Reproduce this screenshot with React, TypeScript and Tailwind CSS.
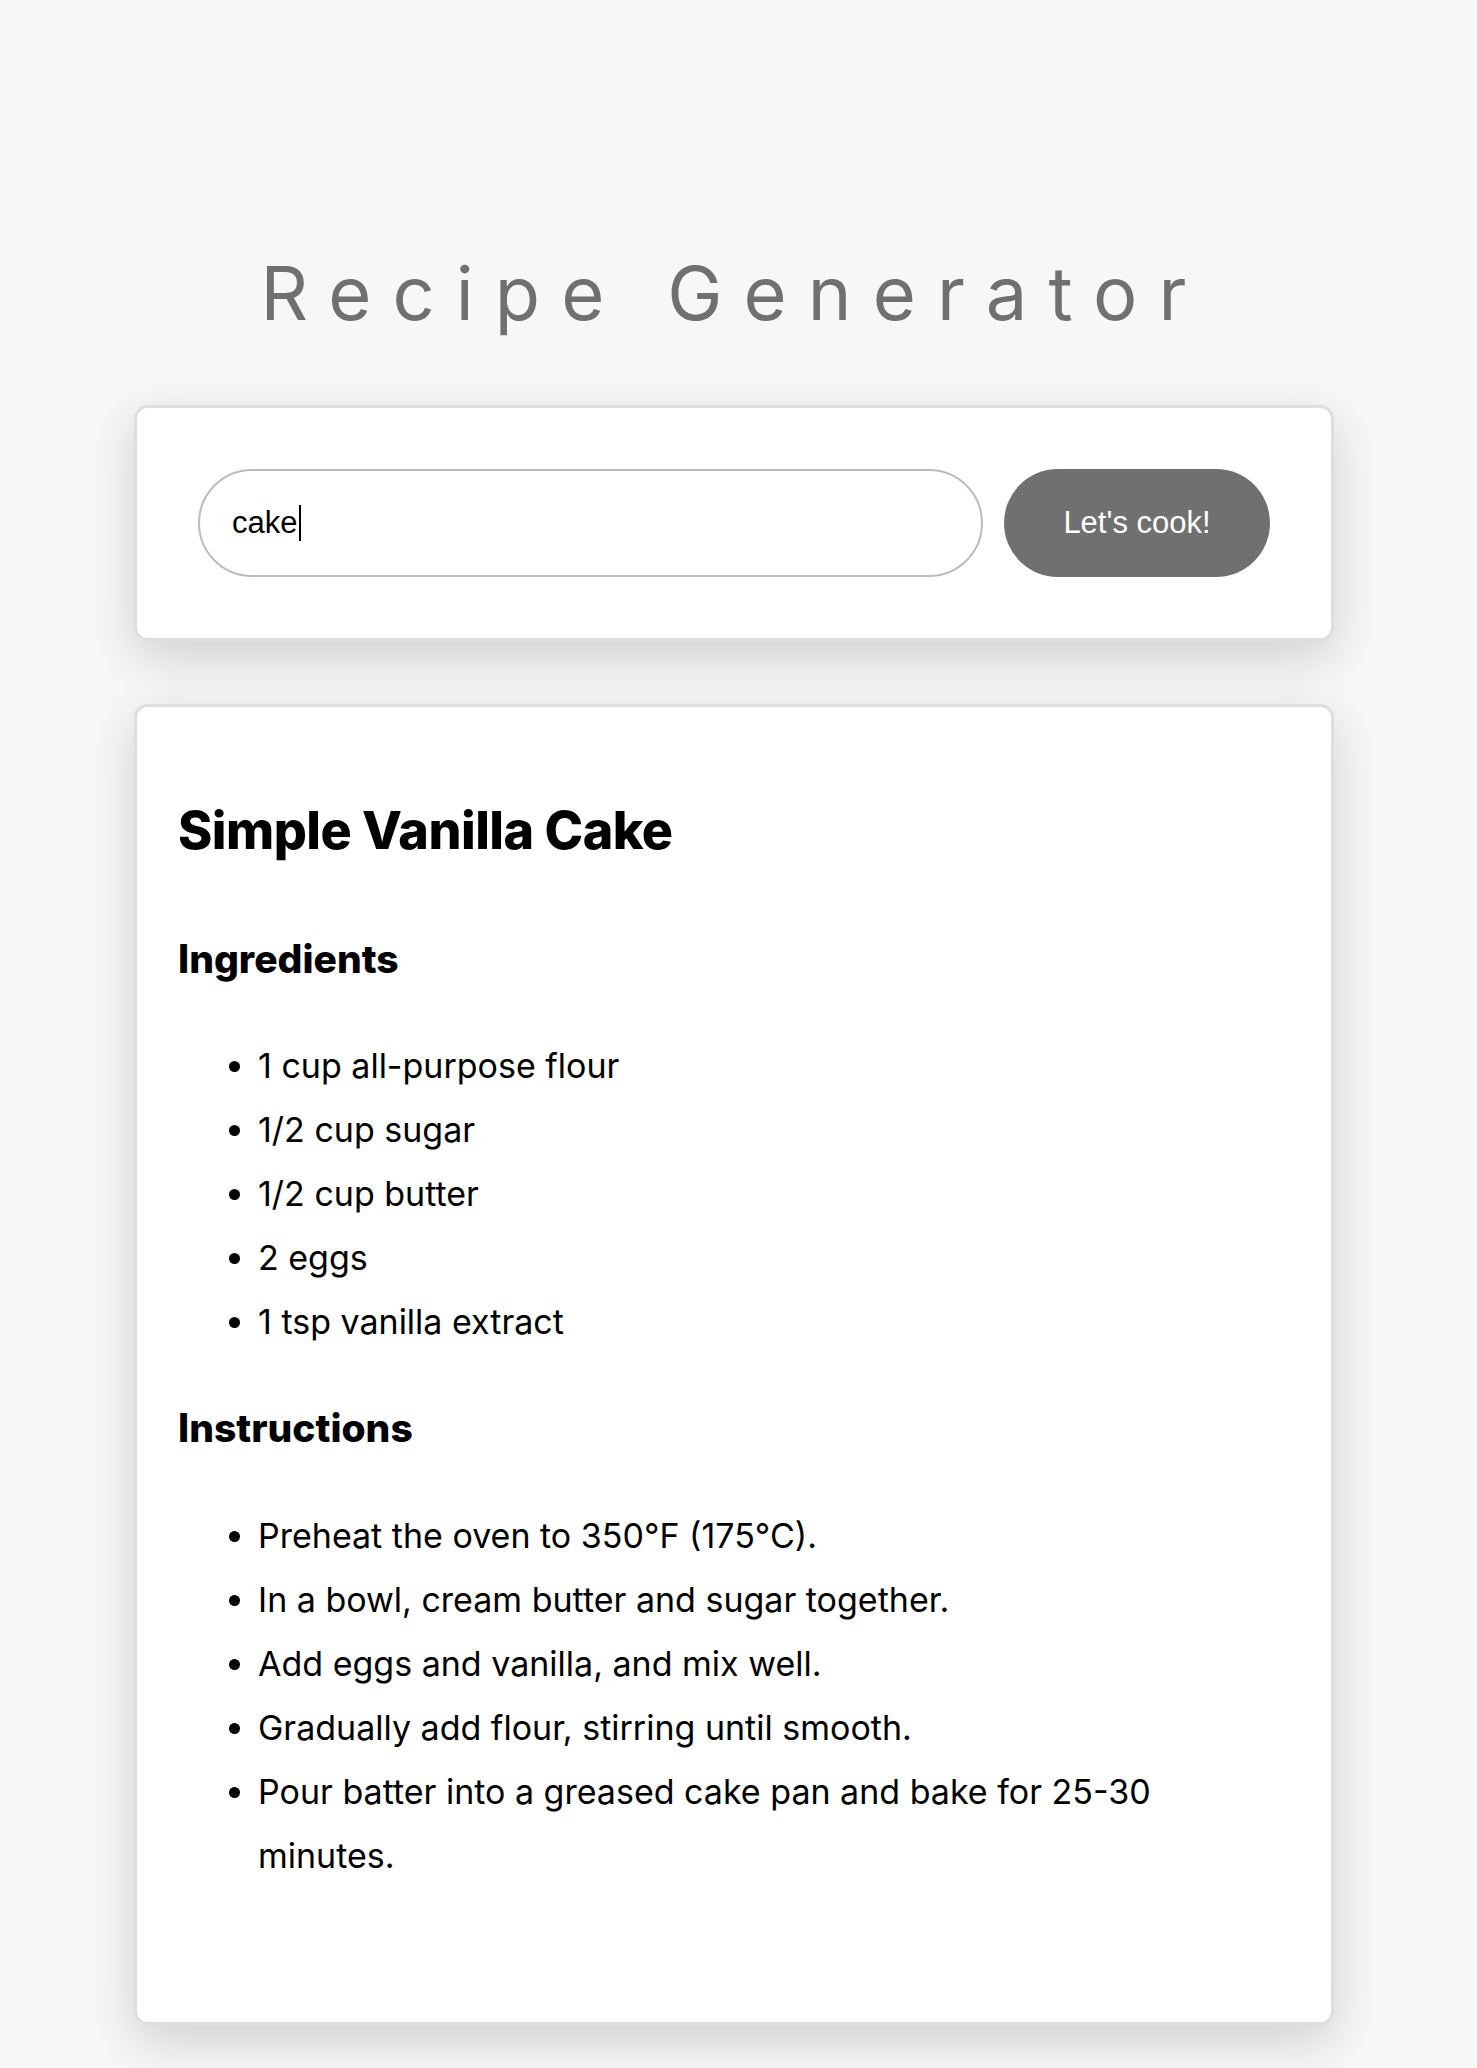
import { useState } from 'react';

const ingredients = [
  '1 cup all-purpose flour',
  '1/2 cup sugar',
  '1/2 cup butter',
  '2 eggs',
  '1 tsp vanilla extract',
];

const instructions = [
  'Preheat the oven to 350°F (175°C).',
  'In a bowl, cream butter and sugar together.',
  'Add eggs and vanilla, and mix well.',
  'Gradually add flour, stirring until smooth.',
  'Pour batter into a greased cake pan and bake for 25-30 minutes.',
];

const App = () => {
  const [query, setQuery] = useState('cake');

  return (
    <div className="min-h-screen bg-[#f7f7f7] pr-[9px] pt-[248px] pb-[43px] font-['Inter',sans-serif] text-black">
      <div className="mx-auto w-[1200px]">
        {/* Title */}
        <h1 className="text-center text-[74px] leading-[90px] font-normal tracking-[0.285em] text-[#707070]">
          Recipe Generator
        </h1>

        {/* Search card */}
        <div className="mt-[67px] rounded-[14px] border-[3px] border-[#dedede] bg-white p-[61px] shadow-[0_16px_50px_rgba(0,0,0,0.16)]">
          <form className="flex gap-[21px]" onSubmit={(e) => e.preventDefault()}>
            <div className="relative flex-1">
              <input
                value={query}
                onChange={(e) => setQuery(e.target.value)}
                className="h-[108px] w-full rounded-full border-2 border-[#bcbcbc] bg-white pl-[32px] font-['Liberation_Sans',Arial,sans-serif] text-[31px] text-black outline-none"
              />
              {/* caret */}
              <span className="pointer-events-none absolute left-[101px] top-[36px] h-[36px] w-[2px] bg-black" />
            </div>
            <button
              type="submit"
              className="h-[108px] w-[266px] rounded-full bg-[#707070] font-['Liberation_Sans',Arial,sans-serif] text-[31px] text-white"
            >
              Let's cook!
            </button>
          </form>
        </div>

        {/* Recipe card */}
        <div className="mt-[63px] rounded-[14px] border-[3px] border-[#dedede] bg-white px-[41px] pt-[91px] pb-[134px] shadow-[0_16px_50px_rgba(0,0,0,0.16)]">
          <h2 className="text-[52px] leading-[66px] font-extrabold tracking-[-0.01em]">Simple Vanilla Cake</h2>

          <h3 className="mt-[71px] text-[39px] leading-[48px] font-extrabold">Ingredients</h3>
          <ul className="mt-[51px] list-disc pl-[80px] text-[34px] leading-[64px]">
            {ingredients.map((item) => (
              <li key={item}>{item}</li>
            ))}
          </ul>

          <h3 className="mt-[50px] text-[39px] leading-[48px] font-extrabold">Instructions</h3>
          <ul className="mt-[52px] max-w-[1040px] list-disc pl-[80px] text-[34px] leading-[64px]">
            {instructions.map((item) => (
              <li key={item}>{item}</li>
            ))}
          </ul>
        </div>
      </div>
    </div>
  );
};

export default App;
